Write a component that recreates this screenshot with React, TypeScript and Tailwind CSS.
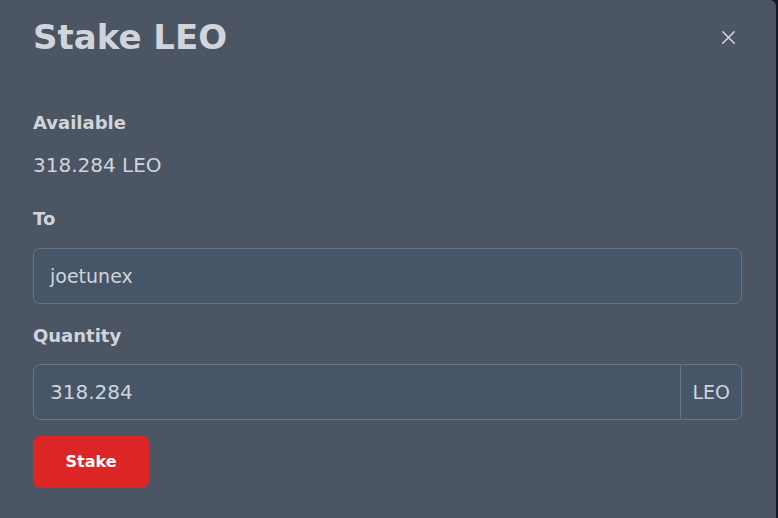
import { X } from "lucide-react";

export default function App() {
  return (
    <div className="w-[778px] h-[518px] bg-[#111827] overflow-hidden flex">
      <div
        className="w-[776px] h-full bg-[#4b5563] text-[#d1d5db] pl-[33px] pr-[34px] rounded-tr-[6px] flex flex-col"
        style={{ fontFamily: "'DejaVu Sans', Lato, sans-serif" }}
      >
        <div className="flex items-center justify-between h-[76px] pb-[2px]">
          <h1 className="text-[34px] font-bold leading-none text-[#d1d5db]">Stake LEO</h1>
          <button className="mr-[2px] text-[#d1d5db]" aria-label="Close">
            <X className="w-[23px] h-[23px]" strokeWidth={1.6} />
          </button>
        </div>

        <div className="mt-[38px] text-[18px] font-bold leading-none">Available</div>
        <div className="mt-[23px] text-[20px] leading-none">318.284 LEO</div>

        <div className="mt-[35px] text-[18px] font-bold leading-none">To</div>
        <div className="mt-[20px] h-[56px] rounded-[7px] border border-[#6b7280] bg-[#475569] flex items-center px-[16px] text-[19px]">
          joetunex
        </div>

        <div className="mt-[23px] text-[18px] font-bold leading-none">Quantity</div>
        <div className="mt-[19px] h-[56px] rounded-[7px] border border-[#6b7280] bg-[#475569] flex text-[20px]">
          <div className="flex-1 flex items-center px-[16px]">318.284</div>
          <div className="border-l border-[#6b7280] flex items-center px-[11px] text-[19px]">LEO</div>
        </div>

        <div className="mt-[16px]">
          <button className="h-[52px] w-[116px] rounded-[7px] bg-[#dc2626] text-white font-bold text-[16px]">
            Stake
          </button>
        </div>
      </div>
    </div>
  );
}
